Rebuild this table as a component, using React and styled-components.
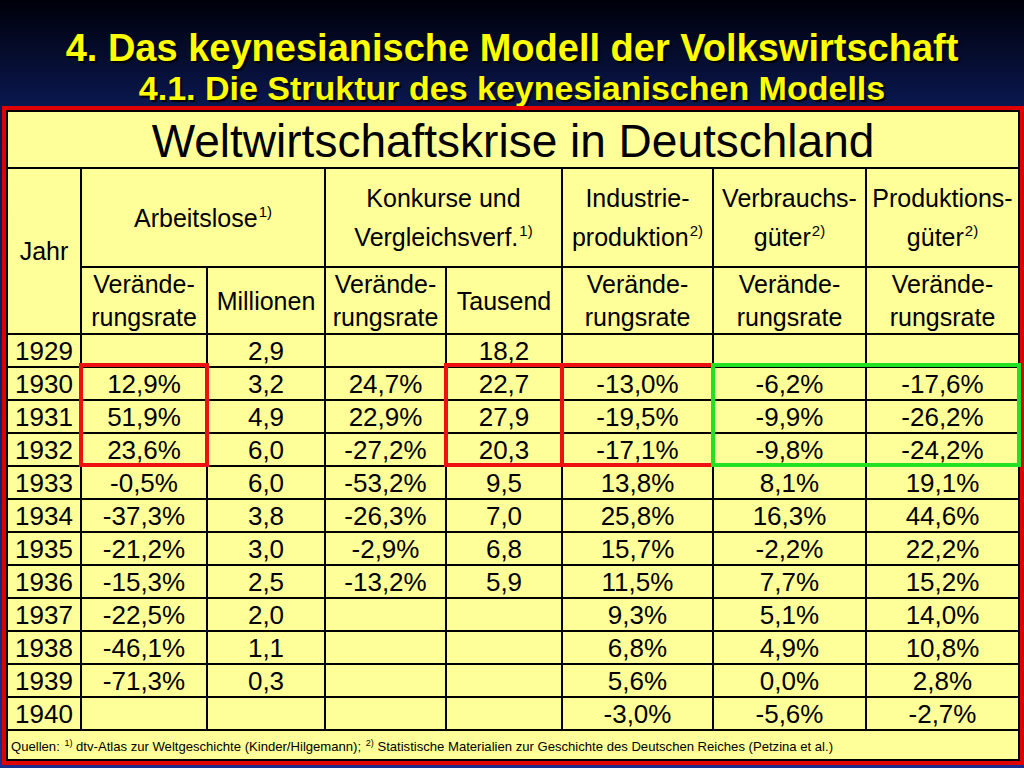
import React from "react";
import styled, { createGlobalStyle } from "styled-components";

const GlobalStyle = createGlobalStyle`
  html, body {
    margin: 0;
    padding: 0;
  }
  body {
    width: 1024px;
    height: 768px;
    overflow: hidden;
    background: linear-gradient(180deg, #00000a 0%, #0a1850 14%, #1b2d8e 100%);
    font-family: "Liberation Sans", Arial, sans-serif;
  }
`;

const Slide = styled.div`
  width: 1024px;
  height: 768px;
  display: flex;
  flex-direction: column;
`;

const Heading = styled.header`
  height: 106px;
  box-sizing: border-box;
  padding-top: 26px;
  text-align: center;
  color: #ffff00;
  font-weight: bold;
  text-shadow: 2px 2px 1px #000;
`;

const HeadLine = styled.div`
  font-size: ${(p) => p.$size}px;
  line-height: ${(p) => p.$lh}px;
  white-space: nowrap;
`;

const Frame = styled.div`
  margin-left: 2px;
  width: 1022px;
  box-sizing: border-box;
  border: 4px solid #e00000;
`;

const Grid = styled.div`
  position: relative;
  display: grid;
  grid-template-columns: 72px 124px 116px 119px 114px 149px 151px 151px;
  grid-template-rows: 55px 97px 65px repeat(12, 31px) 28px;
  gap: 2px;
  background: #000;
  border: 2px solid #000;
  color: #000;
`;

const Cell = styled.div`
  grid-column: span ${(p) => p.$span || 1};
  grid-row: span ${(p) => p.$rows || 1};
  display: flex;
  align-items: center;
  justify-content: center;
  text-align: center;
  background: #ffff99;
  font-size: ${(p) => (p.$data ? 26 : 25)}px;
  line-height: ${(p) => p.$lh || 30}px;
  white-space: nowrap;
`;

const Label = styled.span`
  display: block;
`;

const TitleCell = styled(Cell)`
  font-size: 46px;
  line-height: 52px;
  padding-top: 2px;
`;

const Footer = styled(Cell)`
  justify-content: flex-start;
  padding: 3px 0 0 3px;
  font-size: 13.1px;
  line-height: 16px;
`;

const Sup = styled.span`
  position: relative;
  top: ${(p) => (p.$small ? -5 : -10)}px;
  font-size: ${(p) => (p.$small ? 9 : 15)}px;
  line-height: 0;
  margin-left: 1px;
`;

const Mark = styled.div`
  position: absolute;
  grid-column: ${(p) => p.$cols};
  grid-row: 5 / 8;
  inset: -5px -3px -2px -3px;
  border: 4px solid ${(p) => p.$color};
  pointer-events: none;
  z-index: 1;
`;

const rows = [
  ["1929", "", "2,9", "", "18,2", "", "", ""],
  ["1930", "12,9%", "3,2", "24,7%", "22,7", "-13,0%", "-6,2%", "-17,6%"],
  ["1931", "51,9%", "4,9", "22,9%", "27,9", "-19,5%", "-9,9%", "-26,2%"],
  ["1932", "23,6%", "6,0", "-27,2%", "20,3", "-17,1%", "-9,8%", "-24,2%"],
  ["1933", "-0,5%", "6,0", "-53,2%", "9,5", "13,8%", "8,1%", "19,1%"],
  ["1934", "-37,3%", "3,8", "-26,3%", "7,0", "25,8%", "16,3%", "44,6%"],
  ["1935", "-21,2%", "3,0", "-2,9%", "6,8", "15,7%", "-2,2%", "22,2%"],
  ["1936", "-15,3%", "2,5", "-13,2%", "5,9", "11,5%", "7,7%", "15,2%"],
  ["1937", "-22,5%", "2,0", "", "", "9,3%", "5,1%", "14,0%"],
  ["1938", "-46,1%", "1,1", "", "", "6,8%", "4,9%", "10,8%"],
  ["1939", "-71,3%", "0,3", "", "", "5,6%", "0,0%", "2,8%"],
  ["1940", "", "", "", "", "-3,0%", "-5,6%", "-2,7%"],
];

const Rate = () => (
  <Cell $lh={33}>
    <Label>
      Verände-
      <br />
      rungsrate
    </Label>
  </Cell>
);

const App = () => (
  <Slide>
    <GlobalStyle />
    <Heading>
      <HeadLine $size={38} $lh={44}>
        4. Das keynesianische Modell der Volkswirtschaft
      </HeadLine>
      <HeadLine $size={34} $lh={36}>
        4.1. Die Struktur des keynesianischen Modells
      </HeadLine>
    </Heading>
    <Frame>
      <Grid>
        <TitleCell $span={8}>Weltwirtschaftskrise in Deutschland</TitleCell>

        <Cell $rows={2}>Jahr</Cell>
        <Cell $span={2}>
          <Label>
            Arbeitslose<Sup>1)</Sup>
          </Label>
        </Cell>
        <Cell $span={2} $lh={39}>
          <Label>
            Konkurse und
            <br />
            Vergleichsverf.<Sup>1)</Sup>
          </Label>
        </Cell>
        <Cell $lh={39}>
          <Label>
            Industrie-
            <br />
            produktion<Sup>2)</Sup>
          </Label>
        </Cell>
        <Cell $lh={39}>
          <Label>
            Verbrauchs-
            <br />
            güter<Sup>2)</Sup>
          </Label>
        </Cell>
        <Cell $lh={39}>
          <Label>
            Produktions-
            <br />
            güter<Sup>2)</Sup>
          </Label>
        </Cell>

        <Rate />
        <Cell>Millionen</Cell>
        <Rate />
        <Cell>Tausend</Cell>
        <Rate />
        <Rate />
        <Rate />

        {rows.map((row) =>
          row.map((value, i) => (
            <Cell key={row[0] + "-" + i} $data>
              {value}
            </Cell>
          ))
        )}

        <Footer $span={8}>
          <Label>
            Quellen: <Sup $small>1)</Sup> dtv-Atlas zur Weltgeschichte
            (Kinder/Hilgemann); <Sup $small>2)</Sup> Statistische Materialien
            zur Geschichte des Deutschen Reiches (Petzina et al.)
          </Label>
        </Footer>

        <Mark $cols="2 / 3" $color="#ee1111" />
        <Mark $cols="5 / 6" $color="#ee1111" />
        <Mark $cols="6 / 7" $color="#ee1111" />
        <Mark $cols="7 / 9" $color="#22e022" />
      </Grid>
    </Frame>
  </Slide>
);

export default App;
